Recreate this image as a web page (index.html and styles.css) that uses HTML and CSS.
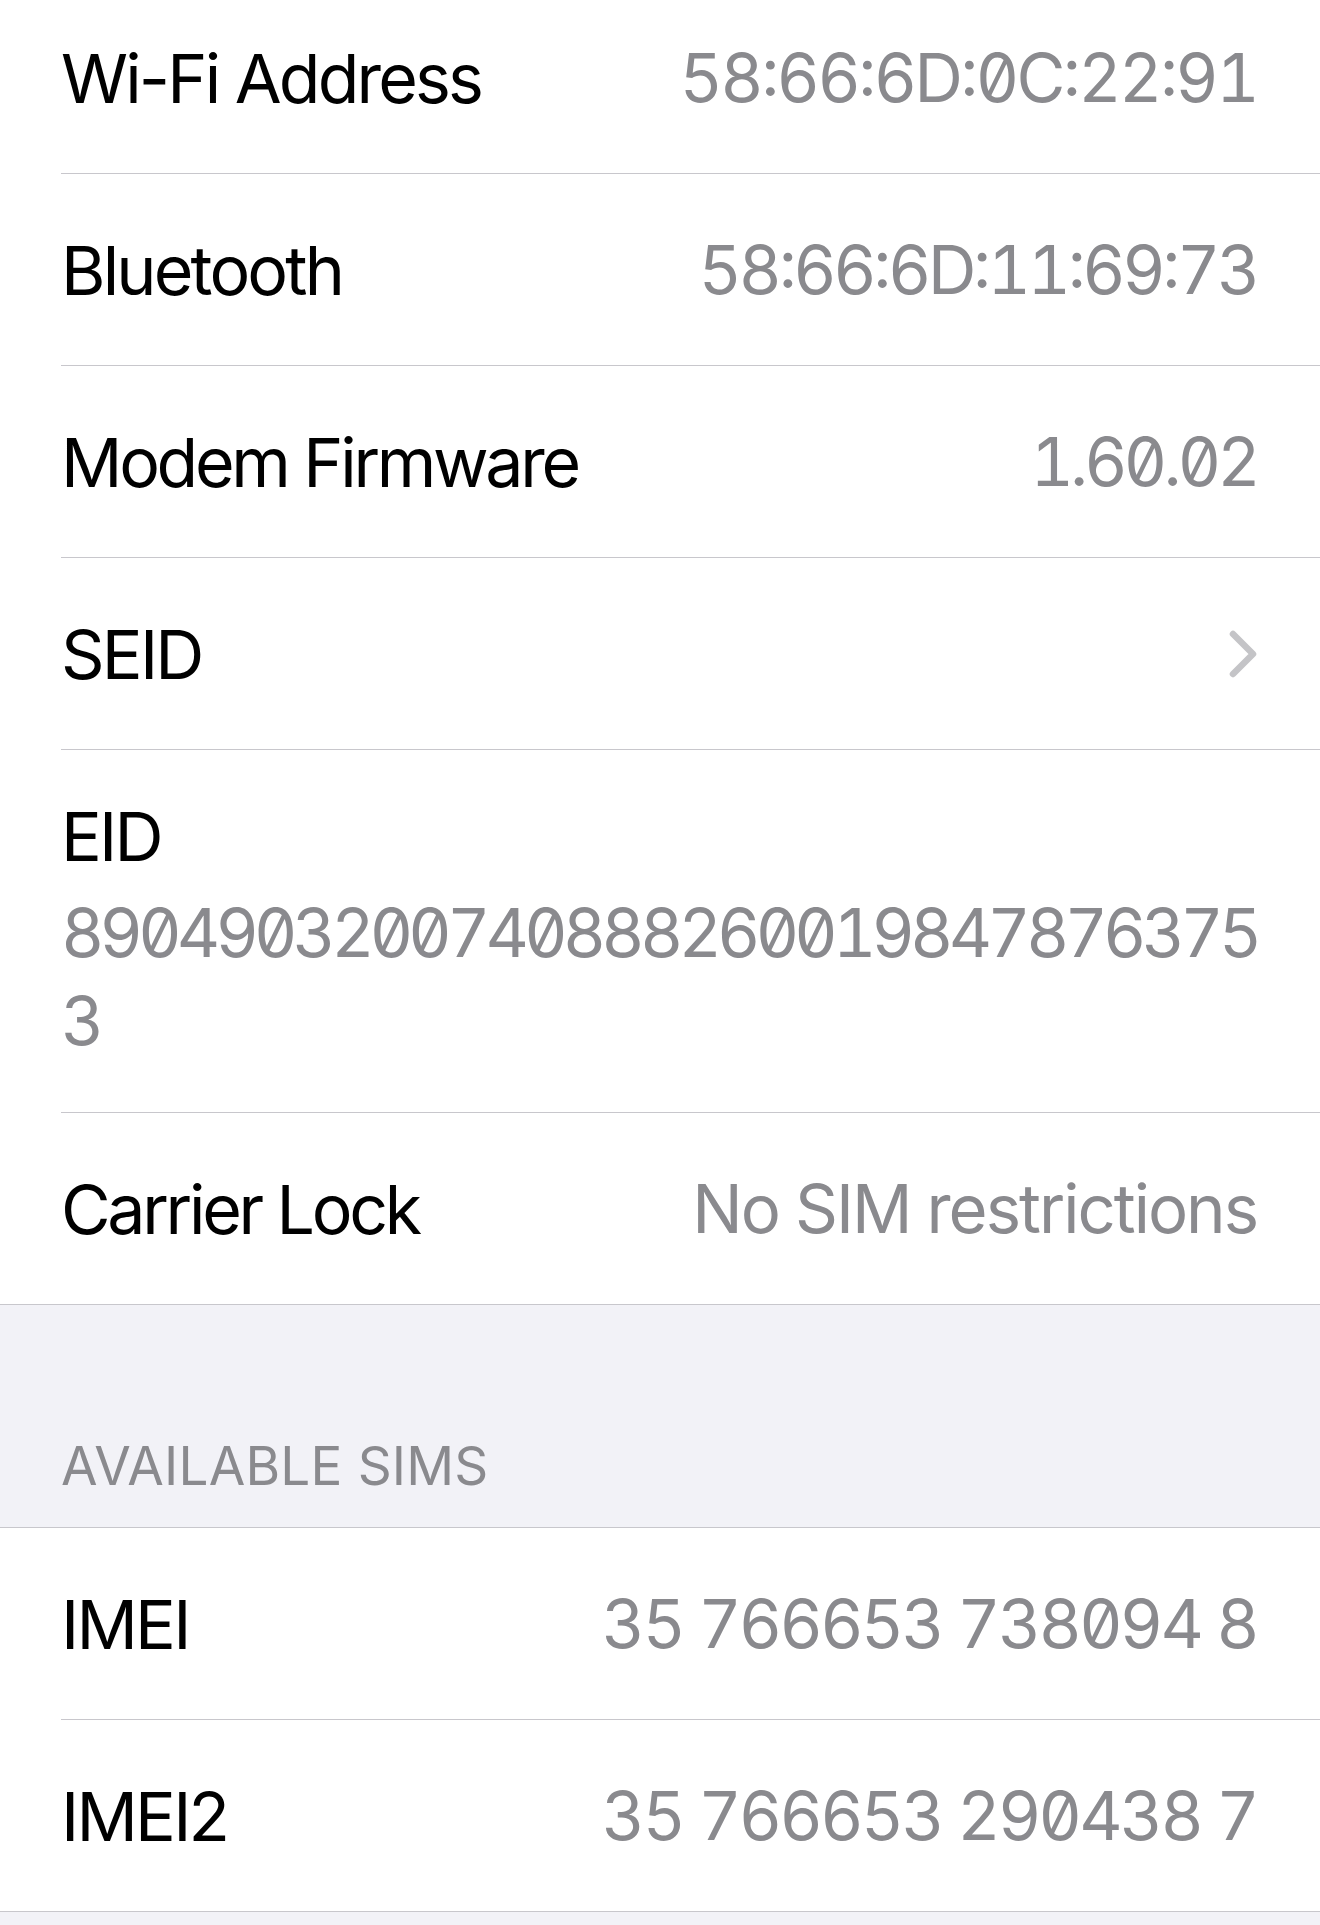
FILE: index.html
```html
<!DOCTYPE html>
<html lang="en">
<head>
<meta charset="utf-8">
<title>About</title>
<link rel="stylesheet" href="styles.css">
</head>
<body>
<div class="screen">
  <section class="group group-first">
    <div class="row">
      <div class="row-inner">
        <span class="label">Wi-Fi Address</span>
        <span class="value value-mac">58:66:6D:0C:22:91</span>
      </div>
    </div>
    <div class="row">
      <div class="row-inner">
        <span class="label">Bluetooth</span>
        <span class="value value-mac value-mac-narrow">58:66:6D:11:69:73</span>
      </div>
    </div>
    <div class="row">
      <div class="row-inner">
        <span class="label label-tight">Modem Firmware</span>
        <span class="value value-version">1.60.02</span>
      </div>
    </div>
    <div class="row">
      <div class="row-inner">
        <span class="label">SEID</span>
        <svg class="chevron" width="30" height="48" viewBox="0 0 30 48" aria-hidden="true">
          <polyline points="4,4 24,24 4,44" fill="none" stroke="#c4c4c7" stroke-width="6.5" stroke-linecap="round" stroke-linejoin="round"/>
        </svg>
      </div>
    </div>
    <div class="row row-tall">
      <div class="row-inner row-inner-stack">
        <span class="label">EID</span>
        <span class="value value-block">89049032007408882600198478763753</span>
      </div>
    </div>
    <div class="row">
      <div class="row-inner">
        <span class="label label-tight">Carrier Lock</span>
        <span class="value value-text">No SIM restrictions</span>
      </div>
    </div>
  </section>

  <div class="section-header">Available SIMs</div>

  <section class="group">
    <div class="row">
      <div class="row-inner">
        <span class="label">IMEI</span>
        <span class="value value-imei">35 766653 738094 8</span>
      </div>
    </div>
    <div class="row">
      <div class="row-inner">
        <span class="label">IMEI2</span>
        <span class="value value-imei">35 766653 290438 7</span>
      </div>
    </div>
  </section>
</div>
</body>
</html>
```

FILE: styles.css
```css
html, body {
  margin: 0;
  padding: 0;
}

body {
  background: #f2f2f7;
  font-family: "Inter", "Liberation Sans", sans-serif;
  color: #000;
  -webkit-font-smoothing: antialiased;
}

.screen {
  width: 1320px;
  min-height: 1925px;
  overflow: hidden;
}

.group {
  background: #ffffff;
  border-top: 1px solid #c8c7cc;
  border-bottom: 1px solid #c8c7cc;
}

.group-first {
  border-top: none;
  margin-top: -18px;
}

.row {
  padding-left: 61px;
}

.row-inner {
  box-sizing: border-box;
  height: 192px;
  display: flex;
  align-items: center;
  justify-content: space-between;
  padding-right: 63px;
  border-bottom: 1px solid #c8c7cc;
}

.row:last-child .row-inner {
  border-bottom: none;
  height: 191px;
}

.label {
  font-size: 68px;
  letter-spacing: -2.8px;
  white-space: nowrap;
}

.label-tight {
  letter-spacing: -3.3px;
}

.value {
  font-size: 67px;
  color: #8a8a8e;
  font-feature-settings: "tnum" 1, "zero" 1, "calt" 1;
  white-space: nowrap;
}

.value-mac {
  letter-spacing: -2.6px;
}

.value-mac-narrow {
  letter-spacing: -3.4px;
}

.value-version {
  letter-spacing: -3.8px;
}

.value-imei {
  letter-spacing: -2.8px;
}

.value-text {
  letter-spacing: -2px;
}

.chevron {
  display: block;
  margin-right: -2px;
}

.row-tall .row-inner {
  height: 363px;
}

.row-inner-stack {
  flex-direction: column;
  align-items: flex-start;
  justify-content: flex-start;
  padding-top: 46px;
}

.row-inner-stack .label {
  line-height: 81px;
}

.value-block {
  display: block;
  width: calc(100% + 12px);
  margin-top: 12px;
  line-height: 88px;
  letter-spacing: -4.85px;
  white-space: normal;
  word-break: break-all;
}

.section-header {
  box-sizing: border-box;
  height: 222px;
  padding: 0 61px 29px;
  display: flex;
  align-items: flex-end;
  font-size: 53px;
  color: #8a8a8e;
  text-transform: uppercase;
  letter-spacing: 0.2px;
}
```
